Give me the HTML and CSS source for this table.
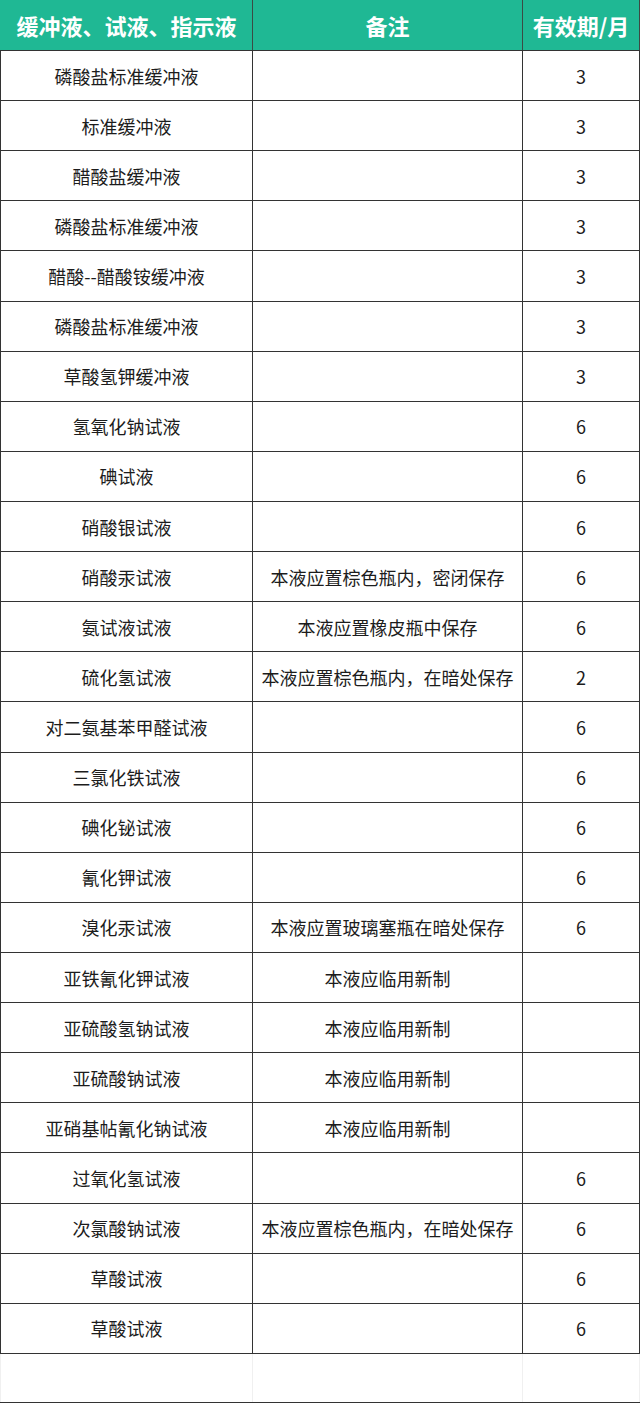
FILE: index.html
```html
<!DOCTYPE html>
<html lang="zh">
<head>
<meta charset="utf-8">
<link rel="stylesheet" href="styles.css">
</head>
<body>
<table class="sheet">
  <colgroup><col class="c1"><col class="c2"><col class="c3"></colgroup>
  <thead>
    <tr><th>缓冲液、试液、指示液</th><th>备注</th><th>有效期/月</th></tr>
  </thead>
  <tbody>
    <tr><td>磷酸盐标准缓冲液</td><td></td><td>3</td></tr>
    <tr><td>标准缓冲液</td><td></td><td>3</td></tr>
    <tr><td>醋酸盐缓冲液</td><td></td><td>3</td></tr>
    <tr><td>磷酸盐标准缓冲液</td><td></td><td>3</td></tr>
    <tr><td>醋酸--醋酸铵缓冲液</td><td></td><td>3</td></tr>
    <tr><td>磷酸盐标准缓冲液</td><td></td><td>3</td></tr>
    <tr><td>草酸氢钾缓冲液</td><td></td><td>3</td></tr>
    <tr><td>氢氧化钠试液</td><td></td><td>6</td></tr>
    <tr><td>碘试液</td><td></td><td>6</td></tr>
    <tr><td>硝酸银试液</td><td></td><td>6</td></tr>
    <tr><td>硝酸汞试液</td><td>本液应置棕色瓶内，密闭保存</td><td>6</td></tr>
    <tr><td>氨试液试液</td><td>本液应置橡皮瓶中保存</td><td>6</td></tr>
    <tr><td>硫化氢试液</td><td>本液应置棕色瓶内，在暗处保存</td><td>2</td></tr>
    <tr><td>对二氨基苯甲醛试液</td><td></td><td>6</td></tr>
    <tr><td>三氯化铁试液</td><td></td><td>6</td></tr>
    <tr><td>碘化铋试液</td><td></td><td>6</td></tr>
    <tr><td>氰化钾试液</td><td></td><td>6</td></tr>
    <tr><td>溴化汞试液</td><td>本液应置玻璃塞瓶在暗处保存</td><td>6</td></tr>
    <tr><td>亚铁氰化钾试液</td><td>本液应临用新制</td><td></td></tr>
    <tr><td>亚硫酸氢钠试液</td><td>本液应临用新制</td><td></td></tr>
    <tr><td>亚硫酸钠试液</td><td>本液应临用新制</td><td></td></tr>
    <tr><td>亚硝基帖氰化钠试液</td><td>本液应临用新制</td><td></td></tr>
    <tr><td>过氧化氢试液</td><td></td><td>6</td></tr>
    <tr><td>次氯酸钠试液</td><td>本液应置棕色瓶内，在暗处保存</td><td>6</td></tr>
    <tr><td>草酸试液</td><td></td><td>6</td></tr>
    <tr><td>草酸试液</td><td></td><td>6</td></tr>
    <tr class="blank"><td></td><td></td><td></td></tr>
  </tbody>
</table>
</body>
</html>
```
FILE: styles.css
```css
html, body {
  margin: 0;
  padding: 0;
  background: #ffffff;
}
.sheet {
  border-collapse: collapse;
  table-layout: fixed;
  width: 639px;
  font-family: "Noto Sans CJK SC", "Noto Sans", sans-serif;
}
.c1 { width: 252px; }
.c2 { width: 270px; }
.c3 { width: 117px; }
.sheet th {
  height: 50px;
  padding: 0;
  background: #1fb894;
  color: #ffffff;
  font-size: 22px;
  font-weight: 700;
  text-align: center;
  vertical-align: middle;
  border-left: 1px solid #3b4a44;
  border-right: 1px solid #3b4a44;
  border-bottom: 1px solid #333333;
  line-height: 1;
}
.sheet th:first-child { border-left-color: #1fb894; }
.sheet td {
  height: 49.12px;
  padding: 0;
  color: #1c1c1c;
  font-size: 18px;
  text-align: center;
  vertical-align: middle;
  border: 1px solid #333333;
  border-top: none;
  line-height: 1;
}
.sheet td:nth-child(2),
.sheet td:nth-child(3) {
  border-left-color: #7a7a7a;
}
.sheet tr.blank td {
  height: 48px;
  border-left-color: #f0f0f0;
  border-right-color: #f0f0f0;
  border-bottom-color: #333333;
}
```
